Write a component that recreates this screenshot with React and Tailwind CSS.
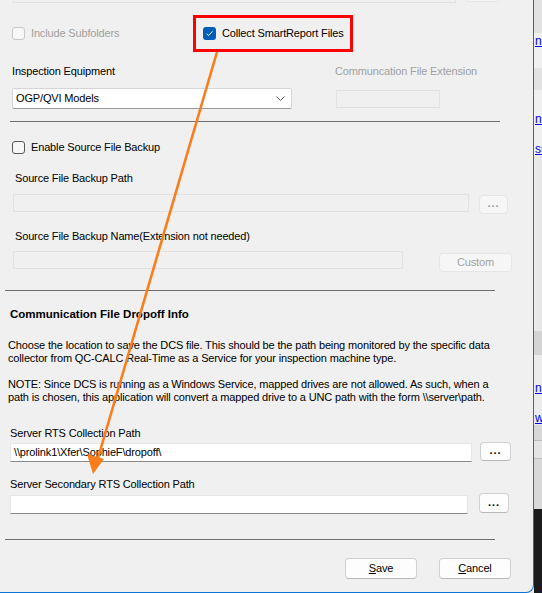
import React from "react";

const font = "font-['Liberation_Sans',Arial,sans-serif]";

function Check({ checked, disabled, label }) {
    return (
        <div className="flex items-center h-[14px]">
            {checked ? (
                <span className="w-[13px] h-[13px] rounded-[3px] bg-[#005fb8] flex items-center justify-center">
                    <svg width="9" height="9" viewBox="0 0 9 9">
                        <path d="M1.6 4.8 L3.6 6.6 L7.4 2.4" fill="none" stroke="white" strokeWidth="1" />
                    </svg>
                </span>
            ) : (
                <span className={"w-[13px] h-[13px] rounded-[3px] border bg-[#f7f7f7] " + (disabled ? "border-[#c8c8c8]" : "border-[#5a5a5a]")} />
            )}
            <span className={"ml-[6px] " + (disabled ? "text-[#a0a0a0]" : "text-black")}>{label}</span>
        </div>
    );
}

function Btn({ children, disabled, className }) {
    return (
        <div
            className={
                "flex items-center justify-center rounded-[4px] border " +
                (disabled
                    ? "bg-[#f6f6f6] border-[#e6e6e6] text-[#a3a3a3] "
                    : "bg-[#fdfdfd] border-[#d0d0d0] border-b-[#b8b8b8] text-black ") +
                className
            }
        >
            {children}
        </div>
    );
}

function Dots({ disabled, className }) {
    return (
        <Btn disabled={disabled} className={className}>
            <span className={"font-bold tracking-[1px] leading-none -mt-[2px] " + (disabled ? "text-[#9a9a9a]" : "")}>...</span>
        </Btn>
    );
}

export default function App() {
    return (
        <div className={"w-[542px] h-[593px] overflow-hidden bg-[#e9e9e9] flex text-[11px] tracking-[-0.15px] " + font}>
            {/* WINDOW */}
            <div className="relative w-[534px] h-[593px] shrink-0 bg-[#f0f0f0] border-r border-b border-[#0a74d8] rounded-br-[8px] overflow-hidden">
                {/* top row, cut off */}
                <div className="flex -mt-[18px] h-[21px]">
                    <div className="ml-[13px] w-[443px] h-[21px] bg-[#f0f0f0] border border-[#e2e2e2]" />
                    <Dots disabled className="ml-[10px] w-[34px] h-[20px]" />
                </div>

                {/* checkboxes */}
                <div className="flex mt-[23px] ml-[12px]">
                    <div className="w-[191px]">
                        <Check disabled label="Include Subfolders" />
                    </div>
                    <Check checked label="Collect SmartReport Files" />
                </div>

                {/* inspection equipment */}
                <div className="flex mt-[25px] ml-[12px] h-[13px] items-center">
                    <span className="w-[323px]">Inspection Equipment</span>
                    <span className="text-[#a0a0a0]">Communcation File Extension</span>
                </div>
                <div className="flex mt-[10px] ml-[12px] items-center">
                    <div className="w-[280px] h-[21px] bg-white border border-[#d4d4d4] border-b-[#9a9a9a] rounded-[2px] flex items-center justify-between px-[3px]">
                        <span>OGP/QVI Models</span>
                        <svg width="9" height="5" viewBox="0 0 9 5" className="mr-[3px]">
                            <path d="M0.5 0.5 L4.5 4.5 L8.5 0.5" fill="none" stroke="#555" strokeWidth="1" />
                        </svg>
                    </div>
                    <div className="ml-[44px] w-[104px] h-[18px] border border-[#e2e2e2]" />
                </div>

                <div className="mt-[12px] ml-[10px] w-[490px] h-px bg-[#6e6e6e]" />

                {/* backup */}
                <div className="mt-[18px] ml-[12px]">
                    <Check label="Enable Source File Backup" />
                </div>
                <div className="mt-[18px] ml-[15px] h-[13px] flex items-center">Source File Backup Path</div>
                <div className="flex mt-[9px] items-start">
                    <div className="ml-[13px] w-[456px] h-[18px] border border-[#e2e2e2]" />
                    <Dots disabled className="ml-[10px] mt-[1px] w-[29px] h-[19px]" />
                </div>
                <div className="mt-[16px] ml-[15px] h-[13px] flex items-center">Source File Backup Name(Extension not needed)</div>
                <div className="flex mt-[8px] items-start">
                    <div className="ml-[13px] w-[390px] h-[18px] border border-[#e2e2e2]" />
                    <Btn disabled className="ml-[36px] mt-[2px] w-[73px] h-[19px]">Custom</Btn>
                </div>

                <div className="mt-[18px] ml-[5px] w-[490px] h-px bg-[#6e6e6e]" />

                {/* communication file dropoff */}
                <div className="mt-[17px] ml-[10px] h-[13px] flex items-center font-bold text-[11.5px] tracking-[0px]">Communication File Dropoff Info</div>
                <div className="mt-[18px] ml-[8px] leading-[13px] whitespace-nowrap">
                    Choose the location to save the DCS file. This should be the path being monitored by the specific data
                    <br />
                    collector from QC-CALC Real-Time as a Service for your inspection machine type.
                </div>
                <div className="mt-[13px] ml-[8px] leading-[13px] whitespace-nowrap">
                    NOTE: Since DCS is running as a Windows Service, mapped drives are not allowed. As such, when a
                    <br />
                    path is chosen, this application will convert a mapped drive to a UNC path with the form \\server\path.
                </div>

                <div className="mt-[23px] ml-[10px] h-[13px] flex items-center">Server RTS Collection Path</div>
                <div className="flex mt-[3px] items-start">
                    <div className="ml-[10px] w-[462px] h-[19px] bg-white border border-[#e6e6e6] border-b-[#8a8a8a] flex items-center px-[3px]">
                        \\prolink1\Xfer\SophieF\dropoff\
                    </div>
                    <Dots className="ml-[8px] -mt-[1px] w-[31px] h-[19px]" />
                </div>
                <div className="mt-[16px] ml-[10px] h-[13px] flex items-center">Server Secondary RTS Collection Path</div>
                <div className="flex mt-[4px] items-start">
                    <div className="ml-[10px] w-[458px] h-[19px] bg-white border border-[#e6e6e6] border-b-[#8a8a8a]" />
                    <Dots className="ml-[11px] -mt-[2px] w-[30px] h-[20px]" />
                </div>

                <div className="mt-[25px] ml-[5px] w-[490px] h-px bg-[#6e6e6e]" />

                <div className="flex mt-[18px]">
                    <Btn className="ml-[345px] w-[72px] h-[21px]"><span><u>S</u>ave</span></Btn>
                    <Btn className="ml-[22px] w-[72px] h-[21px]"><span><u>C</u>ancel</span></Btn>
                </div>

                {/* ANNOTATION */}
                <div className="absolute left-[193px] top-[15px] w-[160px] h-[37px] border-[3px] border-[#ff0000]" />
                <svg className="absolute left-0 top-0 pointer-events-none" width="534" height="593">
                    <line x1="217" y1="52" x2="98" y2="458" stroke="#fa7d1c" strokeWidth="2.6" />
                    <polygon points="93,474 87,454 104,459" fill="#fa7d1c" />
                </svg>
            </div>

            {/* BACKGROUND WINDOW STRIP */}
            <div className="flex-1 flex flex-col text-[#0000ee] underline text-[12px] tracking-[0px]">
                <div className="h-[33px] bg-[#e2e2e2]" />
                <div className="h-[17px] bg-[#f0f0f0] leading-[17px] pl-[1px]">ne</div>
                <div className="h-[18px] bg-[#f0f0f0]" />
                <div className="h-[22px] bg-[#e2e2e2]" />
                <div className="h-[22px] bg-[#f0f0f0]" />
                <div className="h-[14px] bg-[#f0f0f0] leading-[14px] pl-[1px]">ne</div>
                <div className="h-[16px] bg-[#f0f0f0]" />
                <div className="h-[14px] bg-[#f0f0f0] leading-[14px] pl-[1px]">ss</div>
                <div className="h-[175px] bg-gradient-to-r from-[#ececec] to-[#e0e0e0]" />
                <div className="h-[24px] bg-[#d4d4d4]" />
                <div className="h-[26px] bg-[#ececec]" />
                <div className="h-[14px] bg-[#ececec] leading-[14px] pl-[1px]">ne</div>
                <div className="h-[16px] bg-[#ececec]" />
                <div className="h-[14px] bg-[#ececec] leading-[14px] pl-[1px]">w</div>
                <div className="h-[16px] bg-[#d8d8d8] border-b border-[#bdbdbd]" />
                <div className="h-[18px] bg-[#e4e4e4] border-b border-[#bdbdbd]" />
                <div className="h-[50px] bg-[#d8d8d8]" />
                <div className="flex-1 bg-[#1c1c1c]" />
            </div>
        </div>
    );
}
